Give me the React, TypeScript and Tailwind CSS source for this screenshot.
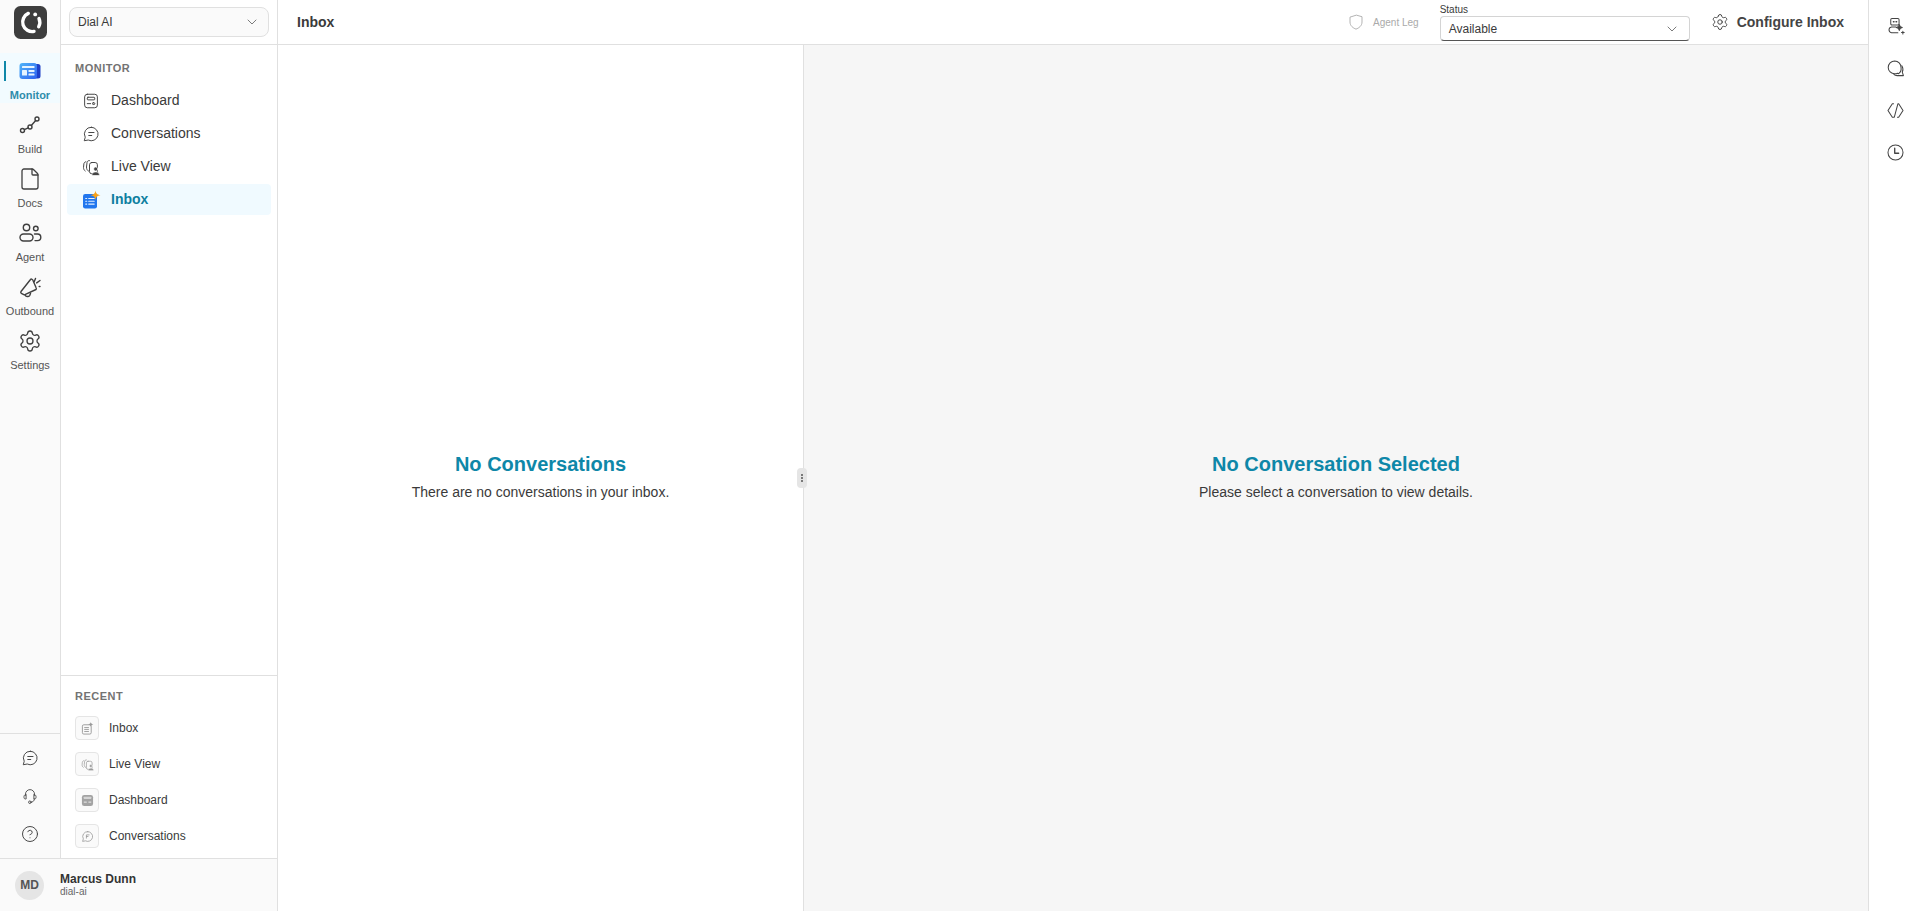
import React from "react";
import { ChevronDown, File, Settings, CircleHelp } from "lucide-react";

type P = { className?: string };
const S = ({ className, children, w = 1.3 }: P & { children: React.ReactNode; w?: number }) => (
  <svg viewBox="0 0 24 24" fill="none" stroke="currentColor" strokeWidth={w} strokeLinecap="round" strokeLinejoin="round" className={className}>
    {children}
  </svg>
);

const Logo = () => (
  <svg viewBox="0 0 33 33" className="w-[33px] h-[33px]">
    <rect width="33" height="33" rx="6.500" fill="#3d3d3d" />
    <path d="M14.300 7.400A9.500 9.500 0 0 0 20 25.400" fill="none" stroke="#fff" strokeWidth="3.400" strokeLinecap="round" />
    <path d="M25 12.500A9.500 9.500 0 0 1 24.700 20.800" fill="none" stroke="#fff" strokeWidth="3.400" strokeLinecap="round" />
    <circle cx="21.200" cy="8.400" r="1.900" fill="#fff" />
  </svg>
);
const MonitorIcon = () => (
  <svg viewBox="0 0 24 24" className="w-6 h-6">
    <defs>
      <linearGradient id="mon" x1="0" y1="0" x2="1" y2="1">
        <stop offset="0" stopColor="#4fb4f8" />
        <stop offset="1" stopColor="#2f62f0" />
      </linearGradient>
    </defs>
    <rect x="14.500" y="5" width="8" height="14.500" rx="2.500" fill="#1e40c8" />
    <rect x="1.500" y="4" width="17.500" height="16" rx="3" fill="url(#mon)" />
    <rect x="4" y="7" width="12.500" height="2" rx=".6" fill="#e6f4ff" />
    <rect x="4" y="11" width="5" height="5.500" rx=".6" fill="#e6f4ff" />
    <rect x="10.500" y="11" width="6" height="2" rx=".6" fill="#e6f4ff" />
    <rect x="10.500" y="14.500" width="6" height="2" rx=".6" fill="#e6f4ff" />
  </svg>
);
const BuildIcon = ({ className }: P) => (
  <S className={className} w={1.4}>
    <circle cx="4.500" cy="17.500" r="2" />
    <circle cx="12" cy="14" r="2" />
    <circle cx="19" cy="6" r="2" />
    <path d="M6.300 16.600 10.200 14.800M13.300 12.500 17.700 7.500" />
  </S>
);
const AgentIcon = ({ className }: P) => (
  <S className={className} w={1.4}>
    <circle cx="8.500" cy="6.500" r="3.200" />
    <circle cx="17.800" cy="7.500" r="2.300" />
    <rect x="2" y="13" width="13" height="7" rx="3.500" />
    <path d="M16.500 13h3a3.200 3.200 0 0 1 0 6.600h-2.500" />
  </S>
);
const MegaphoneIcon = ({ className }: P) => (
  <S className={className} w={1.4}>
    <path d="M12.500 4.500 3 16.500c-.6 1 0 1.800.8 2.200l2 1c1 .4 1.600 0 2.200-.6L18 14.500c.6-.5.4-1.300 0-2L14.800 5c-.6-1-1.700-1.300-2.300-.5Z" />
    <path d="M7 19.800c.5 2 3.500 2.400 4.800.5l.7-1.800" />
    <path d="M17.500 3.500 16.200 6.800M22 5.500l-3.300 2.400M22 11.500h-.8" />
  </S>
);
const DashIcon = ({ className }: P) => (
  <S className={className}>
    <rect x="3.500" y="3" width="17" height="18" rx="3.500" />
    <rect x="7" y="7" width="10" height="3.500" rx="1" />
    <path d="M7 15.500h4.500" />
    <rect x="14" y="14.300" width="3" height="2.400" rx="1" />
  </S>
);
const ChatIcon = ({ className }: P) => (
  <S className={className}>
    <path d="M12.500 3a9 9 0 1 1-4.200 17L3 21l1.300-4.700A9 9 0 0 1 12.500 3Z" />
    <path d="M9 10h7M9 14h4" />
  </S>
);
const LiveIcon = ({ className }: P) => (
  <svg viewBox="0 0 24 24" fill="none" stroke="currentColor" strokeWidth="1.300" strokeLinejoin="round" strokeLinecap="round" className={className}>
    <path d="M5 5c-1.500.4-2.300 1.300-2.500 2.800L2 12.500c0 2.200.8 3.800 2.200 4.800" />
    <path d="M10 3.500H9.500C7.800 3.500 7 4.500 6.700 6L6 12c0 2.800 1 4.600 2.700 5.500" />
    <rect x="10" y="6" width="10.500" height="15" rx="3" />
    <circle cx="18.300" cy="14.700" r="2.700" fill="currentColor" stroke="#fff" strokeWidth=".8" />
    <path d="M13.300 23c0-2.800 2.200-4.300 5-4.300s5 1.500 5 4.300Z" fill="currentColor" stroke="#fff" strokeWidth=".6" />
  </svg>
);
const InboxIcon = () => (
  <svg viewBox="0 0 20 20" className="w-[20px] h-[20px]">
    <rect x="2" y="4" width="14" height="14.500" rx="2.200" fill="#2277ee" />
    <path d="M4.700 8.500h1M7.700 8.500h5.500M4.700 11.300h1M7.700 11.300h5.500M4.700 14.100h1M7.700 14.100h5.500" stroke="#e3f0ff" strokeWidth="1.100" strokeLinecap="round" />
    <path d="M14.500 .5c.5 3 1.500 4 5 4.700-3.500.7-4.500 1.700-5 4.700-.5-3-1.500-4-5-4.700 3.500-.7 4.500-1.700 5-4.700Z" fill="#f7a21b" />
  </svg>
);
const HeadsetIcon = ({ className }: P) => (
  <S className={className} w={1.200}>
    <path d="M6 11V9.500a6 6 0 0 1 12 0V11" />
    <path d="M6 10.500c-1.300 0-2 .9-2 2v1.500c0 1.200.8 2 2 2h.8v-5.500ZM18 10.500c1.300 0 2 .9 2 2v1.500c0 1.200-.8 2-2 2h-.8v-5.500Z" />
    <path d="M17.800 16c0 2.800-2 4-4.300 4.200" />
    <circle cx="11.800" cy="20.300" r="1.700" />
  </S>
);
const ShieldIcon = ({ className }: P) => (
  <S className={className} w={1.200}>
    <path d="M12 3 4 5.500V12c0 5 4 8 8 9.500 4-1.500 8-4.500 8-9.500V5.500Z" />
  </S>
);
const BotSpark = ({ className }: P) => (
  <S className={className}>
    <rect x="6" y="2" width="10.500" height="8" rx="1.500" />
    <path d="M9.300 6h.9M12.600 6h.9" strokeWidth="1.600" />
    <path d="M12.500 12.500H7a3.800 3.800 0 0 0 0 7.500h8" />
    <path d="M16.800 9.500c.4 2.600 1.200 3.400 3.800 3.800-2.600.4-3.400 1.200-3.800 3.800-.4-2.600-1.200-3.400-3.800-3.800 2.600-.4 3.400-1.200 3.800-3.800Z" fill="currentColor" />
    <path d="M21.300 18v3.400M19.600 19.700H23" />
  </S>
);
const ChatsIcon = ({ className }: P) => (
  <S className={className}>
    <path d="M11 2.500a8.200 8.200 0 0 0-8.200 8.200c0 4.500 3.700 8 8.200 8 1.200 0 2.500-.2 3.500-.7L16 18.500a8.200 8.200 0 0 0 3-7.800A8.200 8.200 0 0 0 11 2.500Z" />
    <path d="M20 8.500c1.500 2.500 1.800 5.500.6 8l1.400 4.500h-8c-1.300 0-3-.4-4-1.500" />
  </S>
);
const CodeIcon = ({ className }: P) => (
  <S className={className}>
    <path d="M9.500 3.500H8L2.500 12 8 20.500h2.500L15 3.500h1l5.500 8.500-5.500 8.500h-1.500" />
  </S>
);
const ClockL = ({ className }: P) => (
  <S className={className}>
    <circle cx="12" cy="12" r="9.500" />
    <path d="M11 6.500v6.500h5" strokeWidth="1.700" />
  </S>
);
const RecentInbox = ({ className }: P) => (
  <svg viewBox="0 0 14 14" className={className}>
    <rect x="1.500" y="3" width="9.500" height="10" rx="1.500" fill="none" stroke="currentColor" strokeWidth="1" />
    <path d="M3.500 6h5M3.500 8h5M3.500 10.200h5" stroke="currentColor" strokeWidth="1" />
    <path d="M10.500 0c.3 1.600.9 2.200 2.800 2.600-1.900.4-2.500 1-2.800 2.600-.3-1.600-.9-2.200-2.800-2.600 1.900-.4 2.500-1 2.800-2.600Z" fill="currentColor" />
  </svg>
);
const RecentDash = ({ className }: P) => (
  <svg viewBox="0 0 14 14" className={className}>
    <rect x="1" y="1" width="12" height="12" rx="2.500" fill="#a3a3a3" />
    <rect x="3" y="3" width="8" height="2.500" rx=".5" fill="#d4d4d4" />
    <rect x="3" y="8" width="3.200" height="1.600" fill="#d4d4d4" />
    <rect x="8" y="8" width="3" height="1.600" fill="#d4d4d4" />
  </svg>
);
const RecentChat = ({ className }: P) => (
  <S className={className} w={1.500}>
    <path d="M12.500 3a9 9 0 1 1-4.200 17L3 21l1.300-4.700A9 9 0 0 1 12.500 3Z" />
    <path d="M10 15V9h5M10 12h3" />
  </S>
);

const railItems = [
  { label: "Build", I: BuildIcon },
  { label: "Docs", I: File },
  { label: "Agent", I: AgentIcon },
  { label: "Outbound", I: MegaphoneIcon },
  { label: "Settings", I: Settings },
];
const Rail = () => (
  <div className="w-[61px] shrink-0 bg-[#fafafa] border-r border-[#e0e0e0] flex flex-col">
    <div className="h-[45px] flex justify-center pt-[6px]">
      <Logo />
    </div>
    <div className="mt-2 flex flex-col gap-1">
      <div className="relative h-[50px] bg-[#f2fbff] flex flex-col items-center pt-[6px]">
        <span className="absolute left-[4px] top-[8px] w-[2px] h-[20px] bg-[#0e87a8]" />
        <MonitorIcon />
        <span className="mt-[6px] text-[11px] leading-[13px] font-semibold text-[#2e8cab]">Monitor</span>
      </div>
      {railItems.map(({ label, I }) => (
        <div key={label} className="h-[50px] flex flex-col items-center pt-[6px] text-[#3f3f3f]">
          <I className="w-6 h-6" strokeWidth={1.3} />
          <span className="mt-[6px] text-[11px] leading-[13px] text-[#555]">{label}</span>
        </div>
      ))}
    </div>
    <div className="mt-auto border-t border-[#e0e0e0] h-[125px] flex flex-col items-center pt-[15px] gap-[20px] text-[#444]">
      <ChatIcon className="w-[18px] h-[18px]" />
      <HeadsetIcon className="w-[18px] h-[18px]" />
      <CircleHelp className="w-[18px] h-[18px]" strokeWidth={1.3} />
    </div>
  </div>
);

const navItems = [
  { label: "Dashboard", I: DashIcon },
  { label: "Conversations", I: ChatIcon },
  { label: "Live View", I: LiveIcon },
];
const recent = [
  { label: "Inbox", I: RecentInbox },
  { label: "Live View", I: LiveIcon },
  { label: "Dashboard", I: RecentDash },
  { label: "Conversations", I: RecentChat },
];
const Sidebar = () => (
  <div className="w-[216px] flex flex-col">
    <div className="h-[45px] border-b border-[#e0e0e0] px-2 pt-[7px]">
      <div className="h-[30px] rounded-lg border border-[#e0e0e0] bg-[#fafafa] flex items-center justify-between pl-2 pr-[8px]">
        <span className="text-[12px] text-[#3a3a3a]">Dial AI</span>
        <ChevronDown className="w-4 h-4 text-[#666]" strokeWidth={1.3} />
      </div>
    </div>
    <div className="pt-[16px] px-[6px] flex-1">
      <div className="pl-2 text-[11px] leading-[14px] font-semibold tracking-[0.5px] text-[#737373]">MONITOR</div>
      <div className="mt-[10px] flex flex-col gap-[2px]">
        {navItems.map(({ label, I }) => (
          <div key={label} className="h-[31px] flex items-center pl-[15px] text-[#3a3a3a]">
            <I className="w-[18px] h-[18px] text-[#444]" />
            <span className="ml-[11px] text-[14px]">{label}</span>
          </div>
        ))}
        <div className="h-[31px] flex items-center pl-[14px] bg-[#f0faff] rounded">
          <InboxIcon />
          <span className="ml-[10px] text-[14px] font-semibold text-[#0e7fa0]">Inbox</span>
        </div>
      </div>
    </div>
    <div className="border-t border-[#e0e0e0] h-[183px] px-[14px] pt-[13px]">
      <div className="text-[11px] leading-[14px] font-semibold tracking-[0.5px] text-[#737373]">RECENT</div>
      <div className="mt-[13px] flex flex-col gap-[12px]">
        {recent.map(({ label, I }) => (
          <div key={label} className="h-[24px] flex items-center">
            <div className="w-[24px] h-[24px] rounded border border-[#e5e5e5] bg-[#fafafa] flex items-center justify-center text-[#999]">
              <I className="w-[13px] h-[13px]" />
            </div>
            <span className="ml-[10px] text-[12px] text-[#3a3a3a]">{label}</span>
          </div>
        ))}
      </div>
    </div>
  </div>
);

const Empty = ({ title, sub }: { title: string; sub: string }) => (
  <div className="flex flex-col items-center pb-[4px]">
    <div className="text-[20px] leading-[28px] font-semibold text-[#0e87a8]">{title}</div>
    <div className="mt-[4px] text-[14px] leading-[20px] text-[#3a3a3a]">{sub}</div>
  </div>
);

export default function App() {
  return (
    <div className="w-[1920px] h-[911px] flex overflow-hidden bg-white font-['Liberation_Sans',Arial,sans-serif]">
      <div className="w-[278px] shrink-0 flex flex-col border-r border-[#e0e0e0]">
        <div className="flex flex-1 min-h-0">
          <Rail />
          <Sidebar />
        </div>
        <div className="h-[53px] border-t border-[#e0e0e0] bg-[#fafafa] flex items-center pl-[15px]">
          <div className="w-[29px] h-[29px] rounded-full bg-[#e5e5e5] flex items-center justify-center text-[12px] font-semibold text-[#555]">MD</div>
          <div className="ml-[16px] flex flex-col">
            <span className="text-[12px] leading-[14px] font-semibold text-[#333]">Marcus Dunn</span>
            <span className="text-[10px] leading-[12px] text-[#666]">dial-ai</span>
          </div>
        </div>
      </div>
      <div className="flex-1 min-w-0 flex flex-col">
        <div className="h-[45px] shrink-0 border-b border-[#e0e0e0] flex items-center pl-[19px]">
          <span className="text-[14px] font-semibold text-[#3a3a3a]">Inbox</span>
          <div className="ml-auto flex items-center">
            <ShieldIcon className="w-[18px] h-[18px] text-[#aaa]" />
            <span className="ml-[8px] text-[10px] text-[#aaa]">Agent Leg</span>
            <div className="ml-[21px] flex flex-col w-[250px] pt-[1px]">
              <span className="text-[10px] leading-[12px] text-[#3a3a3a]">Status</span>
              <div className="h-[25px] rounded border border-[#d4d4d4] border-b-[#555] flex items-center justify-between pl-[8px] pr-[9px]">
                <span className="text-[12px] text-[#3a3a3a]">Available</span>
                <ChevronDown className="w-4 h-4 text-[#666]" strokeWidth={1.3} />
              </div>
            </div>
            <Settings className="ml-[21px] w-[18px] h-[18px] text-[#444]" strokeWidth={1.3} />
            <span className="ml-[8px] mr-[24px] text-[14px] font-semibold text-[#444]">Configure Inbox</span>
          </div>
        </div>
        <div className="flex-1 min-h-0 flex">
          <div className="relative w-[526px] shrink-0 border-r border-[#e0e0e0] flex items-center justify-center">
            <Empty title="No Conversations" sub="There are no conversations in your inbox." />
            <div className="absolute -right-[4px] top-[423px] w-[10px] h-[20px] rounded bg-[#e5e5e5] flex flex-col items-center justify-center gap-[1px]">
              <span className="w-[2px] h-[2px] rounded-full bg-[#555]" />
              <span className="w-[2px] h-[2px] rounded-full bg-[#555]" />
              <span className="w-[2px] h-[2px] rounded-full bg-[#555]" />
            </div>
          </div>
          <div className="flex-1 bg-[#f6f6f6] flex items-center justify-center">
            <Empty title="No Conversation Selected" sub="Please select a conversation to view details." />
          </div>
        </div>
      </div>
      <div className="w-[52px] shrink-0 border-l border-[#e0e0e0] flex flex-col items-center pt-[17px] pl-[1px] gap-[23px] text-[#444]">
        <BotSpark className="w-[19px] h-[19px]" />
        <ChatsIcon className="w-[19px] h-[19px]" />
        <CodeIcon className="w-[19px] h-[19px]" />
        <ClockL className="w-[19px] h-[19px]" />
      </div>
    </div>
  );
}
